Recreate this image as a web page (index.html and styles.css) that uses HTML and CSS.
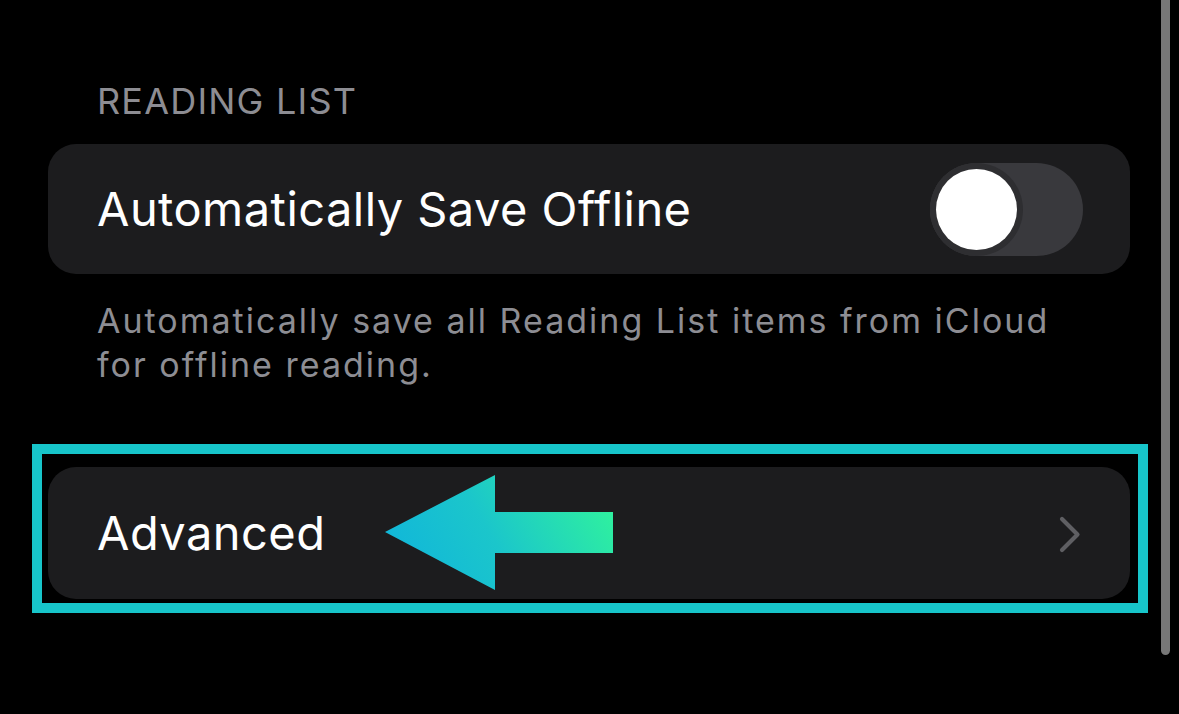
FILE: index.html
```html
<!DOCTYPE html>
<html>
<head>
<meta charset="utf-8">
<link rel="stylesheet" href="styles.css">
</head>
<body>
<div class="page">
  <div class="section-header">READING LIST</div>
  <div class="card card-toggle">
    <span class="row-label">Automatically Save Offline</span>
    <div class="switch"><div class="knob"></div></div>
  </div>
  <div class="section-footer">Automatically save all Reading List items from iCloud for offline reading.</div>
  <div class="card card-link">
    <span class="row-label">Advanced</span>
    <svg class="chevron" width="22" height="37" viewBox="0 0 22 37"><path d="M3 3 L18.5 18.5 L3 34" fill="none" stroke="#5f5f63" stroke-width="4.2" stroke-linecap="round" stroke-linejoin="round"/></svg>
  </div>
  <div class="highlight"></div>
  <svg class="arrow" width="228" height="115" viewBox="0 0 228 115">
    <defs>
      <linearGradient id="ag" gradientUnits="userSpaceOnUse" x1="40" y1="120" x2="228" y2="10">
        <stop offset="0" stop-color="#12b8d8"/>
        <stop offset="0.4" stop-color="#1bc6cb"/>
        <stop offset="1" stop-color="#31f59a"/>
      </linearGradient>
    </defs>
    <polygon points="0,57 110,0 110,37 228,37 228,78 110,78 110,115" fill="url(#ag)"/>
  </svg>
  <div class="scrollbar"></div>
</div>
</body>
</html>
```
FILE: styles.css
```css
html, body {
  margin: 0;
  padding: 0;
  background: #000;
}
body {
  width: 1179px;
  height: 714px;
  overflow: hidden;
  font-family: "Inter", "Roboto", sans-serif;
}
.page {
  position: relative;
  height: 714px;
  padding: 79px 49px 0 48px;
  box-sizing: border-box;
}
.section-header {
  padding-left: 49px;
  font-size: 36px;
  line-height: 44px;
  color: #8d8d93;
  letter-spacing: 1.2px;
}
.card {
  background: #1c1c1e;
  border-radius: 28px;
  display: flex;
  align-items: center;
  justify-content: space-between;
  padding-left: 49px;
}
.card-toggle {
  margin-top: 21px;
  height: 130px;
  padding-right: 47px;
}
.row-label {
  color: #fff;
  font-size: 47px;
  line-height: 58px;
  letter-spacing: 0.45px;
}
.switch {
  width: 153px;
  height: 93px;
  border-radius: 47px;
  background: #39393d;
  padding: 6px;
  box-sizing: border-box;
}
.knob {
  width: 81px;
  height: 81px;
  border-radius: 50%;
  background: #fff;
  box-shadow: 0 0 0 6px #2e2e31;
}
.section-footer {
  margin-top: 25px;
  padding-left: 49px;
  font-size: 34px;
  line-height: 44px;
  color: #8d8d93;
  letter-spacing: 2px;
  width: 990px;
}
.card-link {
  margin-top: 80px;
  height: 132px;
  padding-right: 49px;
}
.chevron {
  display: block;
  margin-top: 3px;
}
.highlight {
  position: absolute;
  left: 32px;
  top: 444px;
  width: 1116px;
  height: 169px;
  border: 10px solid #17c5ca;
  box-sizing: border-box;
}
.arrow {
  position: absolute;
  left: 385px;
  top: 475px;
}
.scrollbar {
  position: absolute;
  left: 1161px;
  top: 0;
  width: 9px;
  height: 655px;
  background: #777;
  border-radius: 0 0 5px 5px;
}
```
